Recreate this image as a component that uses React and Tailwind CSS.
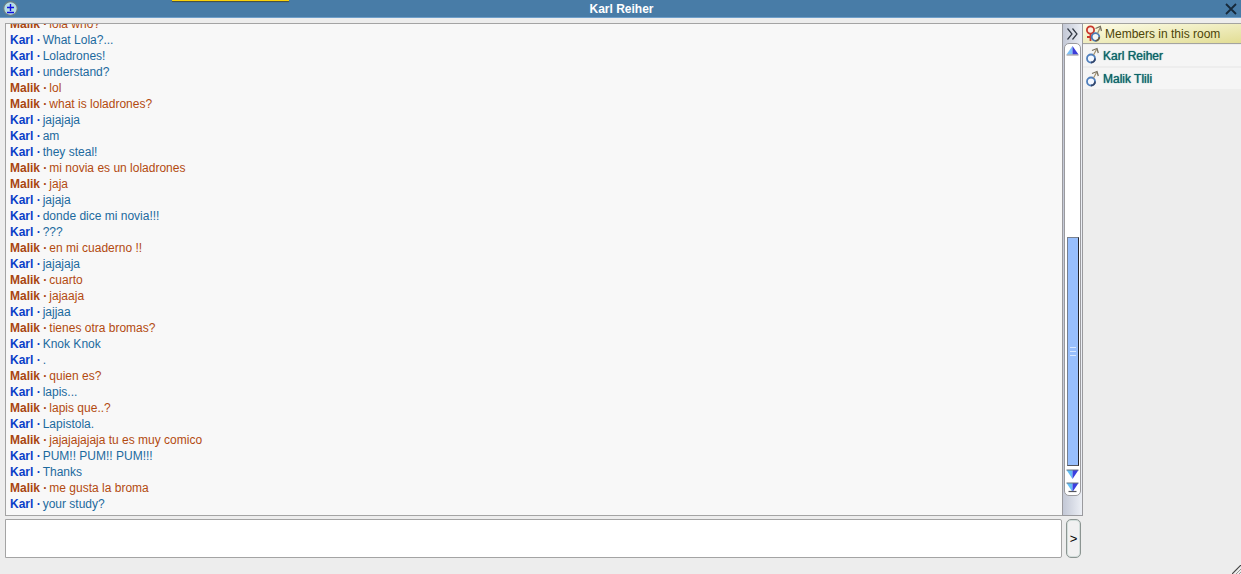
import { useState } from "react";

const chatMessages = [
  { from: "Malik", text: "lola who?" },
  { from: "Karl", text: "What Lola?..." },
  { from: "Karl", text: "Loladrones!" },
  { from: "Karl", text: "understand?" },
  { from: "Malik", text: "lol" },
  { from: "Malik", text: "what is loladrones?" },
  { from: "Karl", text: "jajajaja" },
  { from: "Karl", text: "am" },
  { from: "Karl", text: "they steal!" },
  { from: "Malik", text: "mi novia es un loladrones" },
  { from: "Malik", text: "jaja" },
  { from: "Karl", text: "jajaja" },
  { from: "Karl", text: "donde dice mi novia!!!" },
  { from: "Karl", text: "???" },
  { from: "Malik", text: "en mi cuaderno !!" },
  { from: "Karl", text: "jajajaja" },
  { from: "Malik", text: "cuarto" },
  { from: "Malik", text: "jajaaja" },
  { from: "Karl", text: "jajjaa" },
  { from: "Malik", text: "tienes otra bromas?" },
  { from: "Karl", text: "Knok Knok" },
  { from: "Karl", text: "." },
  { from: "Malik", text: "quien es?" },
  { from: "Karl", text: "lapis..." },
  { from: "Malik", text: "lapis que..?" },
  { from: "Karl", text: "Lapistola." },
  { from: "Malik", text: "jajajajajaja tu es muy comico" },
  { from: "Karl", text: "PUM!! PUM!! PUM!!!" },
  { from: "Karl", text: "Thanks" },
  { from: "Malik", text: "me gusta la broma" },
  { from: "Karl", text: "your study?" },
];

const members = ["Karl Reiher", "Malik Tlili"];

function MaleIcon() {
  return (
    <svg width="13" height="18" viewBox="0 0 13 18" fill="none" aria-hidden="true">
      <circle cx="5" cy="11.5" r="4" fill="#f4f8ff" stroke="#4f7fbc" strokeWidth="1.8" />
      <path d="M9 11.5a4 4 0 0 1-4 4" stroke="#34466a" strokeWidth="1.8" />
      <path d="M7.5 8 10.5 2.5" stroke="#a08f6c" strokeWidth="1.2" />
      <path d="M6 3.5 11 1.5 12.3 6" stroke="#77705f" strokeWidth="1.3" />
    </svg>
  );
}

function MembersIcon() {
  return (
    <svg width="16" height="18" viewBox="0 0 16 18" fill="none" aria-hidden="true">
      <circle cx="4.5" cy="5" r="3.6" fill="#fbeee0" stroke="#c8382c" strokeWidth="1.8" />
      <path d="M4.5 9v7M1 12h7" stroke="#c8382c" strokeWidth="1.8" />
      <circle cx="9.5" cy="12" r="3.8" fill="#f4f6f4" stroke="#4a7ab4" strokeWidth="1.8" />
      <path d="M13.3 12a3.8 3.8 0 0 1-3.8 3.8" stroke="#6b5a3c" strokeWidth="1.6" />
      <path d="m11.5 8.5 2.5-5.5" stroke="#a08f6c" strokeWidth="1.2" />
      <path d="M9.5 3.5 14.3 1.5 15.5 6" stroke="#77705f" strokeWidth="1.3" />
    </svg>
  );
}

function UpArrow() {
  return (
    <svg width="13" height="10" viewBox="0 0 13 10" aria-hidden="true">
      <path d="M6.5 0 .5 8.5h6z" fill="#7cc0f8" />
      <path d="M6.5 0 12.5 8.5h-6z" fill="#3c3cd8" />
      <path d="M.5 9h12" stroke="#8d8d92" />
    </svg>
  );
}

function DownArrow({ end }) {
  return (
    <svg width="13" height="11" viewBox="0 0 13 11" aria-hidden="true">
      <path d="M.5 1h6v9z" fill="#62bdf5" />
      <path d="M12.5 1h-6v9z" fill="#3b3fe0" />
      <path d="M.5 1h12" stroke="#6d7480" />
      {end && <path d="M2.5 9.5h8" stroke="#55565e" strokeWidth="1.2" />}
    </svg>
  );
}

function Message({ from, text }) {
  const isKarl = from === "Karl";
  return (
    <p className="shrink-0 whitespace-nowrap">
      <b className={isKarl ? "mr-0.5 text-[#0a3fc8]" : "mr-0.5 text-[#a84510]"}>{from} ·</b>
      <span className={isKarl ? "text-[#1c6a9e]" : "text-[#b34a10]"}>{text}</span>
    </p>
  );
}

function ScrollRail() {
  return (
    <div className="flex w-[21px] shrink-0 flex-col border border-[#9a9a9e] bg-linear-to-r from-[#c3c8d6] to-[#eceff5] pb-[19px]">
      <button type="button" aria-label="Hide members" className="flex h-[19px] shrink-0 items-center justify-center">
        <svg width="11" height="12" viewBox="0 0 11 12" fill="none" stroke="#333a46" strokeWidth="1.2" aria-hidden="true">
          <path d="m.5.5 4.5 5.5-4.5 5.5M5.5.5 10 6l-4.5 5.5" />
        </svg>
      </button>
      <div className="mx-px flex min-h-0 flex-1 flex-col rounded-[5px] border border-[#9a9a9e] bg-white">
        <button type="button" aria-label="Scroll up" className="flex h-4 shrink-0 items-start justify-center pt-0.5">
          <UpArrow />
        </button>
        <div className="flex min-h-0 flex-1 flex-col justify-end">
          <div className="mx-auto flex h-[56.5%] w-3 flex-col items-center justify-center gap-[3px] border border-[#77808f] border-r-[#26272e] border-b-[#55565e] bg-[#98bffd]">
            <i className="h-px w-1.5 bg-[#d8e8ff]" />
            <i className="h-px w-1.5 bg-[#d8e8ff]" />
            <i className="h-px w-1.5 bg-[#d8e8ff]" />
          </div>
        </div>
        <button type="button" aria-label="Scroll down" className="flex h-4 shrink-0 items-center justify-center">
          <DownArrow />
        </button>
        <button type="button" aria-label="Scroll to end" className="flex h-[13px] shrink-0 items-start justify-center">
          <DownArrow end />
        </button>
      </div>
    </div>
  );
}

export default function App() {
  const [draft, setDraft] = useState("");

  const handleSubmit = (e) => {
    e.preventDefault();
    setDraft("");
  };

  return (
    <div className="relative flex h-screen flex-col overflow-hidden bg-[#ededed] font-['Liberation_Sans',Arial,sans-serif] text-[12px] leading-4">
      <header className="flex h-[18px] shrink-0 items-center justify-between border-b border-[#6f9fca] bg-[#487ca7] pr-1 pl-[3px]">
        <button type="button" aria-label="Resize text">
          <svg width="15" height="15" viewBox="0 0 15 15" fill="none" aria-hidden="true">
            <circle cx="7.5" cy="7.5" r="6.8" fill="#b5dde6" stroke="#6c7f84" strokeWidth="1.2" />
            <path d="M7.5 3v7M4 6.5h7M4 11.5h7" stroke="#1010e0" strokeWidth="1.4" />
          </svg>
        </button>
        <h1 className="font-bold text-white">Karl Reiher</h1>
        <button type="button" aria-label="Close">
          <svg width="12" height="12" viewBox="0 0 12 12" stroke="#16293a" strokeWidth="1.8" aria-hidden="true">
            <path d="m1 1 10 10M11 1 1 11" />
          </svg>
        </button>
      </header>

      {/* edge of the notice that hangs over the title bar */}
      <div className="absolute top-0 left-[172px] h-px w-[117px] bg-[#fbd30a] shadow-[0_1px_1px_#4a4630]" />

      <main className="flex min-h-0 flex-1 pt-[5px]">
        <section className="flex min-w-0 flex-1 flex-col gap-[3px] pb-4 pl-[5px]">
          <div className="flex min-h-0 flex-1">
            <div className="flex min-w-0 flex-1 flex-col justify-end overflow-hidden border border-r-0 border-[#a4a4a4] bg-[#f8f8f8] px-1 pb-[3px]">
              {chatMessages.map((msg, index) => (
                <Message key={index} from={msg.from} text={msg.text} />
              ))}
            </div>
            <ScrollRail />
          </div>

          <form onSubmit={handleSubmit} className="flex h-[39px] shrink-0 gap-1 pr-0.5">
            <textarea
              aria-label="Message"
              value={draft}
              onChange={(e) => setDraft(e.target.value)}
              className="min-w-0 flex-1 resize-none rounded-r-xs border border-[#a4a4a4] bg-white px-1 outline-none"
            />
            <button
              type="submit"
              className="w-[15px] rounded-[5px] border border-[#8c9592] bg-[#f1f1f1] text-[13px] text-black shadow-[inset_0_0_0_1px_#d3dedb]"
            >
              &gt;
            </button>
          </form>
        </section>

        <aside className="w-[158px] shrink-0">
          <h2 className="flex h-[21px] items-center gap-[3px] border-y border-[#a4a4a0] bg-linear-to-br from-[#fdfce8] to-[#e2dd94] pl-[3px] text-[#4d4408]">
            <MembersIcon />
            <span className="whitespace-nowrap">Members in this room</span>
          </h2>
          <ul className="flex flex-col gap-0.5 pt-px text-[#0a6468]">
            {members.map((name) => (
              <li key={name} className="flex h-[21px] items-center gap-1 bg-[#f5f5f5] pl-[3px] [text-shadow:0_0_1px_#0a6468]">
                <MaleIcon />
                {name}
              </li>
            ))}
          </ul>
        </aside>
      </main>

      <svg className="absolute right-0 bottom-0" width="9" height="9" viewBox="0 0 9 9" fill="none" aria-hidden="true">
        <path d="M0 9 9 0" stroke="#444" strokeWidth="1.2" />
        <path d="m4 9 5-5M7 9l2-2" stroke="#999" />
      </svg>
    </div>
  );
}
